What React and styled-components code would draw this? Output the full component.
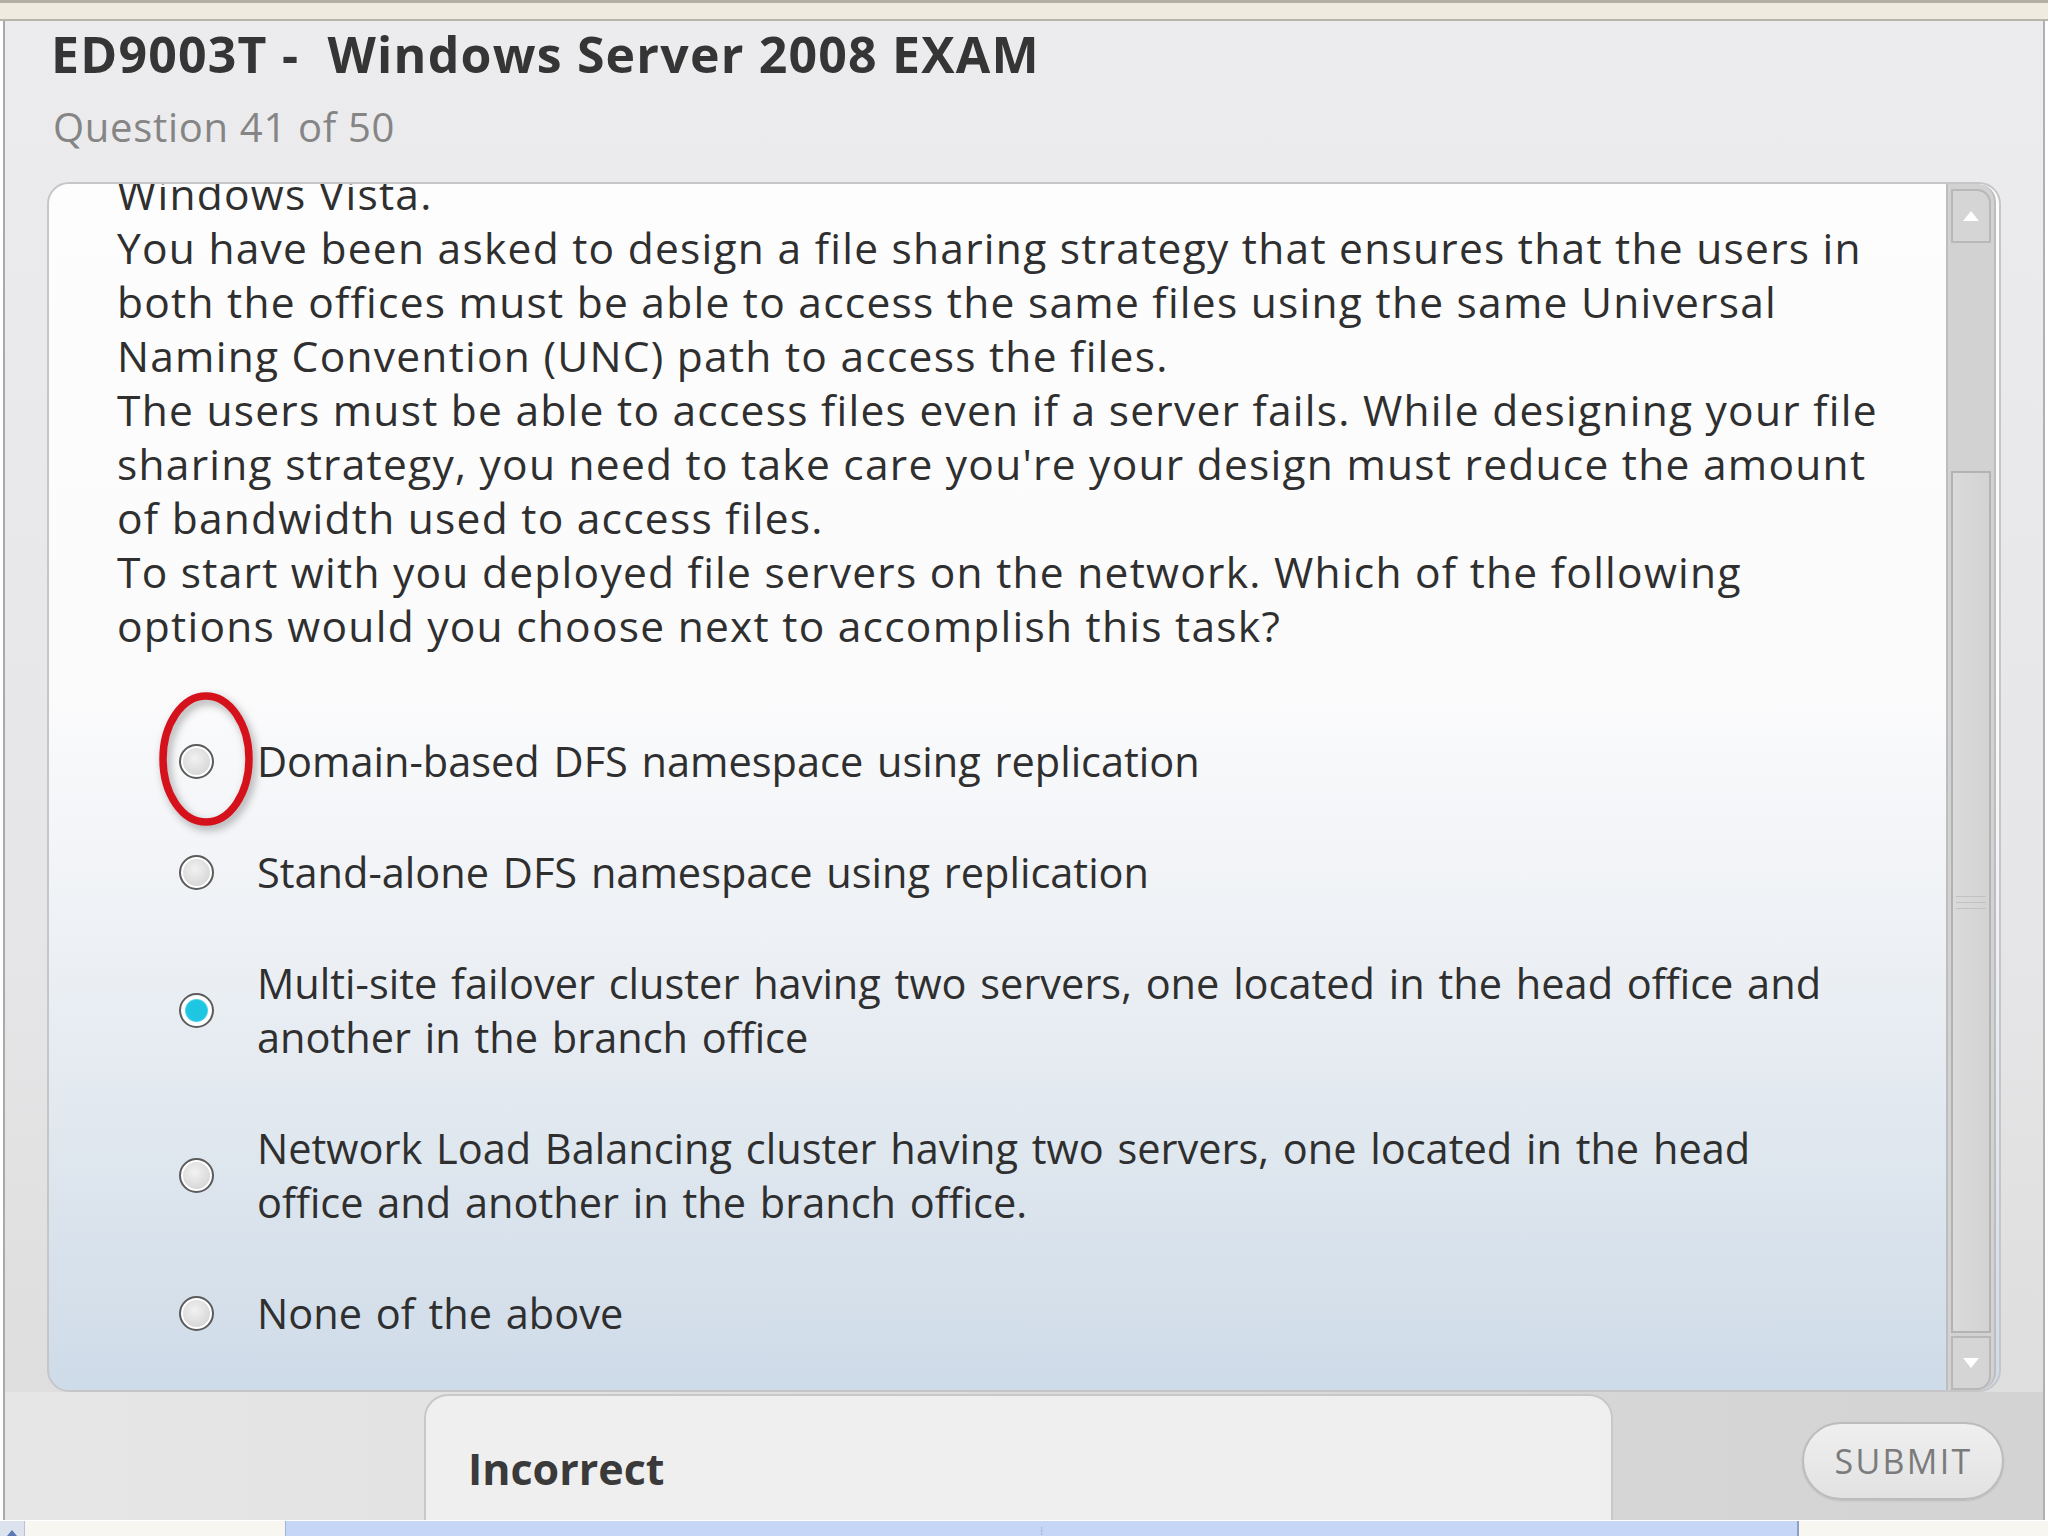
import React from "react"
import styled, { createGlobalStyle } from "styled-components"

const GlobalStyle = createGlobalStyle`
  html, body {
    margin: 0;
    padding: 0;
    background: #ffffff;
  }
  body {
    width: 2048px;
    height: 1536px;
    overflow: hidden;
    font-family: "Open Sans", "Noto Sans", sans-serif;
  }
`

const Screen = styled.div`
  width: 2048px;
  height: 1536px;
  display: flex;
  flex-direction: column;
`

const TopStrip = styled.div`
  height: 16px;
  flex: none;
  background: #efecdf;
  border-top: 3px solid #b3b1a4;
  border-bottom: 2px solid #b8b6aa;
`

const Window = styled.div`
  flex: 1;
  min-height: 0;
  margin-left: 3px;
  margin-right: 3px;
  display: flex;
  flex-direction: column;
  background: linear-gradient(to bottom, #ececee 0%, #e6e6e8 60%, #dcdcdc 100%);
  border-left: 2px solid #a9a9a9;
  border-right: 2px solid #b0b0b0;
`

const Header = styled.header`
  padding: 3px 0 0 46px;
  height: 161px;
  box-sizing: border-box;
`

const Title = styled.h1`
  margin: 0;
  font-family: "Open Sans", "Noto Sans", sans-serif;
  font-weight: 700;
  font-size: 50px;
  line-height: 60px;
  color: #353535;
  white-space: pre;
  letter-spacing: 1.2px;
`

const Subtitle = styled.div`
  margin-top: 18px;
  font-size: 40px;
  line-height: 50px;
  letter-spacing: 0.7px;
  color: #858585;
  padding-left: 2px;
`

const ContentBox = styled.section`
  margin-left: 42px;
  width: 1954px;
  height: 1210px;
  flex: none;
  box-sizing: border-box;
  border: 2px solid #c6c6c8;
  border-radius: 22px;
  background: linear-gradient(
    to bottom,
    #fdfdfe 0%,
    #fbfbfc 42%,
    #eef1f5 62%,
    #dbe4ed 85%,
    #cedbe8 100%
  );
  display: grid;
  grid-template-columns: 1fr 50px;
  column-gap: 3px;
  padding-right: 3px;
  overflow: hidden;
`

const Viewport = styled.div`
  overflow: hidden;
  position: relative;
`

const Question = styled.div`
  margin: -17px 0 0 68px;
  width: 1783px;
  font-size: 42.5px;
  line-height: 54px;
  letter-spacing: 1.25px;
  color: #2f2f2f;
`

const Para = styled.p`
  margin: 0;
`

const Options = styled.div`
  position: relative;
  margin: 81px 0 0 130px;
  display: flex;
  flex-direction: column;
  gap: 57px;
`

const Option = styled.label`
  display: flex;
  align-items: center;
  gap: 43px;
`

const Radio = styled.span`
  flex: none;
  width: 35px;
  height: 35px;
  box-sizing: border-box;
  border-radius: 50%;
  border: 2px solid #5c5c5c;
  background: ${(p) =>
    p.$checked
      ? "radial-gradient(circle, #1ec6e2 0 10px, #4fd4ea 11px, #ffffff 12px)"
      : "radial-gradient(circle at 45% 40%, #f2f2f2 0, #d6d6d6 70%, #cfcfcf 100%)"};
  box-shadow: inset 0 0 0 2px #ffffff;
`

const OptionText = styled.span`
  max-width: 1598px;
  font-size: 41.5px;
  line-height: 54px;
  word-spacing: 3px;
  color: #2f2f2f;
`

const Marker = styled.svg`
  position: absolute;
  left: -20px;
  top: -43px;
  width: 110px;
  height: 150px;
  overflow: visible;
  pointer-events: none;
  filter: drop-shadow(3px 4px 4px rgba(0, 0, 0, 0.32));
`

const ScrollBar = styled.div`
  display: flex;
  flex-direction: column;
  padding-top: 5px;
  background: #d2d2d3;
  border-left: 2px solid #bdbdbe;
  border-right: 2px solid #bdbdbe;
  border-top-right-radius: 18px;
  border-bottom-right-radius: 18px;
`

const ArrowButton = styled.div`
  height: 54px;
  margin: 0 3px;
  box-sizing: border-box;
  border: 2px solid #b8b8b9;
  background: #d5d5d6;
  display: flex;
  align-items: center;
  justify-content: center;
  border-top-right-radius: ${(p) => (p.$up ? "14px" : "0")};
  border-bottom-right-radius: ${(p) => (p.$up ? "0" : "14px")};
`

const Arrow = styled.span`
  width: 0;
  height: 0;
  border-left: 8px solid transparent;
  border-right: 8px solid transparent;
  ${(p) =>
    p.$up
      ? "border-bottom: 10px solid #ffffff;"
      : "border-top: 10px solid #ffffff;"}
`

const SmallArrow = styled.span`
  width: 0;
  height: 0;
  border-left: 5px solid transparent;
  border-right: 5px solid transparent;
  border-bottom: 6px solid #5b79b5;
`

const TrackGap = styled.div`
  height: 228px;
  flex: none;
`

const Thumb = styled.div`
  flex: 1;
  margin: 0 3px 3px;
  box-sizing: border-box;
  border: 2px solid #b3b3b4;
  background: linear-gradient(to right, #dadadb, #d3d3d4);
  display: flex;
  flex-direction: column;
  align-items: center;
  justify-content: center;
  gap: 5px;
`

const Grip = styled.span`
  width: 30px;
  height: 1px;
  background: #c2c2c3;
`

const Footer = styled.div`
  flex: 1;
  display: flex;
  align-items: stretch;
  background: linear-gradient(to right, #e6e6e6 0%, #e3e3e3 20%, #d6d6d6 80%, #d3d3d3 100%);
`

const Spacer = styled.div`
  width: 419px;
  flex: none;
`

const Feedback = styled.div`
  width: 1189px;
  flex: none;
  box-sizing: border-box;
  margin-top: 2px;
  background: #efefef;
  border: 2px solid #c8c8c8;
  border-bottom: none;
  border-radius: 24px 24px 0 0;
  padding: 44px 0 0 42px;
`

const FeedbackText = styled.div`
  font-weight: 700;
  font-size: 43px;
  line-height: 58px;
  color: #3a3a3a;
`

const Actions = styled.div`
  flex: 1;
  display: flex;
  justify-content: flex-end;
  padding: 30px 39px 0 0;
`

const SubmitButton = styled.button`
  width: 202px;
  height: 78px;
  box-sizing: border-box;
  border-radius: 39px;
  border: 2px solid #bcbcbc;
  background: linear-gradient(to bottom, #efefef, #e2e2e2);
  box-shadow: 0 1px 2px rgba(0, 0, 0, 0.12);
  font-family: "Open Sans", "Noto Sans", sans-serif;
  font-size: 34px;
  letter-spacing: 2.3px;
  color: #7b7b7b;
  padding: 0 0 0 1px;
`

const HScroll = styled.div`
  height: 15px;
  flex: none;
  display: flex;
  background: #f7f6f1;
  border-top: 1px solid #ffffff;
`

const HButton = styled.div`
  width: 24px;
  background: #dce3ee;
  border-right: 1px solid #b7c2d4;
  display: flex;
  align-items: flex-end;
  justify-content: center;
`

const HThumb = styled.div`
  margin-left: 260px;
  width: 1511px;
  background: #c6d6f6;
  border-left: 1px solid #9fb2d8;
  border-right: 2px solid #8e9fc4;
  display: flex;
  justify-content: center;
  align-items: flex-end;
  color: #9cb0d8;
  font-size: 10px;
  line-height: 10px;
`

const questionParas = [
  "Windows Vista.",
  "You have been asked to design a file sharing strategy that ensures that the users in both the offices must be able to access the same files using the same Universal Naming Convention (UNC) path to access the files.",
  "The users must be able to access files even if a server fails. While designing your file sharing strategy, you need to take care you're your design must reduce the amount of bandwidth used to access files.",
  "To start with you deployed file servers on the network. Which of the following options would you choose next to accomplish this task?",
]

const answers = [
  { text: "Domain-based DFS namespace using replication" },
  { text: "Stand-alone DFS namespace using replication" },
  {
    text: "Multi-site failover cluster having two servers, one located in the head office and another in the branch office",
    checked: true,
  },
  {
    text: "Network Load Balancing cluster having two servers, one located in the head office and another in the branch office.",
  },
  { text: "None of the above" },
]

export default function App() {
  return (
    <Screen>
      <GlobalStyle />
      <TopStrip />
      <Window>
        <Header>
          <Title>{"ED9003T -  Windows Server 2008 EXAM"}</Title>
          <Subtitle>Question 41 of 50</Subtitle>
        </Header>

        <ContentBox>
          <Viewport>
            <Question>
              {questionParas.map((p) => (
                <Para key={p}>{p}</Para>
              ))}
            </Question>
            <Options>
              {answers.map((a) => (
                <Option key={a.text}>
                  <Radio $checked={a.checked} />
                  <OptionText>{a.text}</OptionText>
                </Option>
              ))}
              <Marker viewBox="0 0 110 150">
                <ellipse
                  cx="47"
                  cy="68"
                  rx="43"
                  ry="63"
                  fill="none"
                  stroke="#d5121c"
                  strokeWidth="7.5"
                />
              </Marker>
            </Options>
          </Viewport>
          <ScrollBar>
            <ArrowButton $up>
              <Arrow $up />
            </ArrowButton>
            <TrackGap />
            <Thumb>
              <Grip />
              <Grip />
              <Grip />
            </Thumb>
            <ArrowButton>
              <Arrow />
            </ArrowButton>
          </ScrollBar>
        </ContentBox>

        <Footer>
          <Spacer />
          <Feedback>
            <FeedbackText>Incorrect</FeedbackText>
          </Feedback>
          <Actions>
            <SubmitButton>SUBMIT</SubmitButton>
          </Actions>
        </Footer>
      </Window>
      <HScroll>
        <HButton>
          <SmallArrow />
        </HButton>
        <HThumb>⁞</HThumb>
      </HScroll>
    </Screen>
  )
}
